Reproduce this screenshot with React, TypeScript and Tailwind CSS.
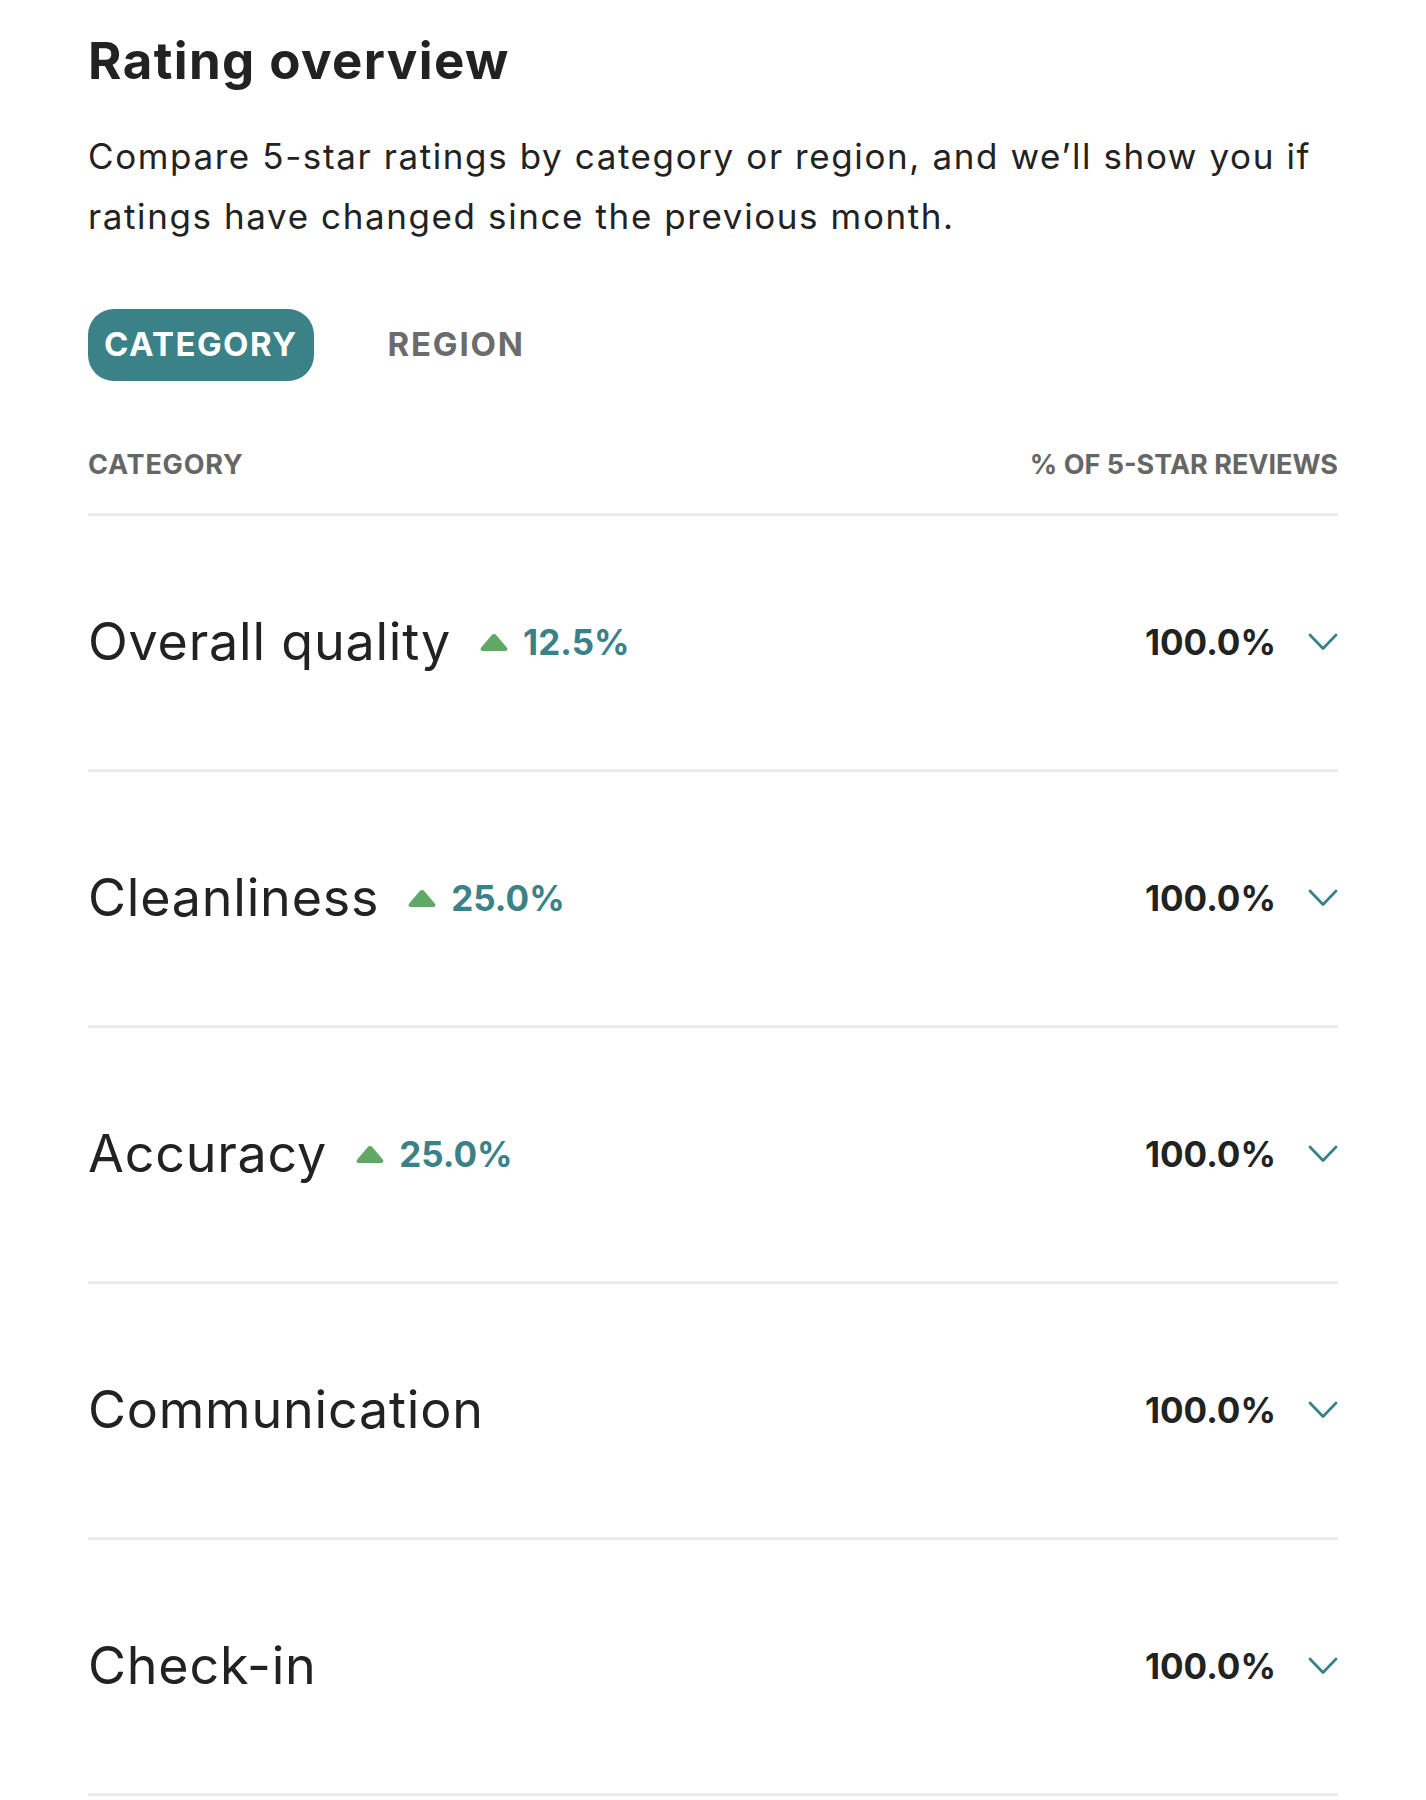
const rows = [
  { name: "Overall quality", change: "12.5%", value: "100.0%" },
  { name: "Cleanliness", change: "25.0%", value: "100.0%" },
  { name: "Accuracy", change: "25.0%", value: "100.0%" },
  { name: "Communication", change: null, value: "100.0%" },
  { name: "Check-in", change: null, value: "100.0%" },
];

function UpTriangle() {
  return (
    <svg width="30" height="20" viewBox="0 0 30 20" className="shrink-0">
      <path
        d="M12.6 3.2a3 3 0 0 1 4.8 0l10.4 12.2c1.3 1.6.3 3.6-1.9 3.6H4.1c-2.2 0-3.2-2-1.9-3.6z"
        fill="#5fa866"
      />
    </svg>
  );
}

function Chevron() {
  return (
    <svg width="30" height="18" viewBox="0 0 30 18" fill="none" className="shrink-0">
      <path d="M2 2l13 13.5L28 2" stroke="#3b8188" strokeWidth="2.8" strokeLinecap="round" strokeLinejoin="round" />
    </svg>
  );
}

export default function App() {
  return (
    <div className="min-h-screen bg-white text-[#222222] font-['Inter','Noto_Sans',sans-serif]">
      <div className="px-[88px] pt-[26px]">
        <h1 className="text-[51px] font-bold leading-[70px] tracking-[1.4px]">Rating overview</h1>
        <p className="mt-[30px] text-[35px] leading-[60px] tracking-[1.6px] text-[#222222]">
          Compare 5-star ratings by category or region, and we’ll show you if ratings have changed since the previous month.
        </p>

        <div className="mt-[63px] flex items-center gap-[74px]">
          <button className="h-[72px] rounded-[26px] bg-[#3b8188] px-[16px] text-[33px] font-bold tracking-[1.4px] text-white">
            CATEGORY
          </button>
          <button className="text-[33px] font-bold tracking-[1.8px] text-[#6b6b6b]">REGION</button>
        </div>

        <div className="mt-[64px] flex items-center justify-between border-b-[3px] border-[#ebebeb] pb-[27px] text-[27px] font-bold text-[#666666]">
          <span className="tracking-[0.8px]">CATEGORY</span>
          <span>% OF 5-STAR REVIEWS</span>
        </div>

        {rows.map((r) => (
          <div key={r.name} className="flex h-[256px] items-center justify-between border-b-[3px] border-[#ebebeb]">
            <div className="flex items-center">
              <span className="text-[52px] tracking-[0.8px]">{r.name}</span>
              {r.change && (
                <span className="ml-[28px] flex items-center gap-[14px]">
                  <UpTriangle />
                  <span className="text-[35px] font-bold text-[#3b8188]">{r.change}</span>
                </span>
              )}
            </div>
            <div className="flex items-center gap-[32px]">
              <span className="text-[35px] font-bold text-[#222222]">{r.value}</span>
              <Chevron />
            </div>
          </div>
        ))}
      </div>
    </div>
  );
}
